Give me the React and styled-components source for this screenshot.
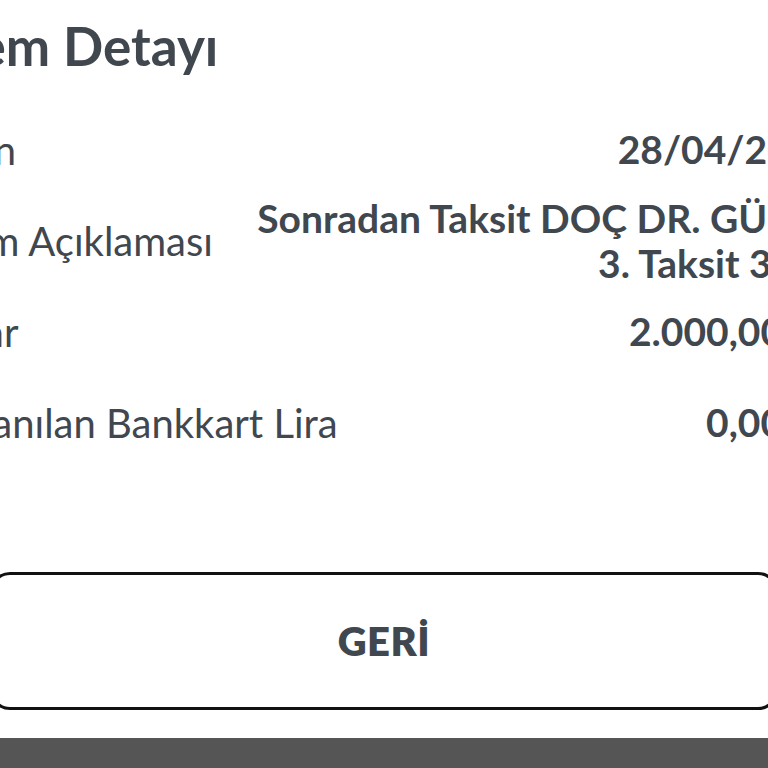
import React from "react";
import styled, { createGlobalStyle } from "styled-components";

const GlobalStyle = createGlobalStyle`
  html, body {
    margin: 0;
    padding: 0;
    background: #ffffff;
  }
  body {
    font-family: Lato, "Noto Sans", "Liberation Sans", sans-serif;
    color: #41474f;
  }
`;

const rows = [
  { label: "Oran", value: ["28/04/2024"] },
  {
    label: "İşlem Açıklaması",
    value: ["Sonradan Taksit DOÇ DR. GÜLER", "3. Taksit 3/12"],
  },
  { label: "Tutar", value: ["2.000,00 TL"] },
  { label: "Kazanılan Bankkart Lira", value: ["0,00 TL"] },
];

class App extends React.Component {
  render() {
    return (
      <Page>
        <GlobalStyle />
        <Content>
          <Title>İşlem Detayı</Title>
          <DetailList>
            {rows.map((row) => (
              <DetailRow key={row.label}>
                <Label>{row.label}</Label>
                <Value>
                  {row.value.map((line) => (
                    <ValueLine key={line}>{line}</ValueLine>
                  ))}
                </Value>
              </DetailRow>
            ))}
          </DetailList>
        </Content>
        <ButtonArea>
          <BackButton type="button">GERİ</BackButton>
        </ButtonArea>
        <BottomBar />
      </Page>
    );
  }
}

export default App;

const Page = styled.div`
  width: 768px;
  height: 768px;
  overflow: hidden;
  display: flex;
  flex-direction: column;
  background: #fff;
`;

const Content = styled.div`
  margin-left: -72px;
  width: 907px;
  flex-shrink: 0;
`;

const Title = styled.h1`
  margin: 0 0 0 -2px;
  padding-top: 18px;
  font-size: 53px;
  line-height: 56px;
  font-weight: 700;
`;

const DetailList = styled.div`
  margin-top: 30px;
  display: flex;
  flex-direction: column;
`;

const DetailRow = styled.div`
  display: flex;
  align-items: center;
  justify-content: space-between;
  min-height: 91px;
`;

const Label = styled.span`
  font-size: 40px;
  font-weight: 400;
  white-space: nowrap;
`;

const Value = styled.div`
  display: flex;
  flex-direction: column;
  align-items: flex-end;
  text-align: right;
`;

const ValueLine = styled.span`
  font-size: 39px;
  line-height: 45px;
  font-weight: 700;
  white-space: nowrap;
`;

const ButtonArea = styled.div`
  margin: 104px -10px 0;
  flex-shrink: 0;
`;

const BackButton = styled.button`
  display: flex;
  align-items: center;
  justify-content: center;
  width: 100%;
  height: 138px;
  border: 3px solid #111;
  border-radius: 20px;
  background: #fff;
  font-family: Lato, "Noto Sans", sans-serif;
  font-size: 40px;
  font-weight: 800;
  color: #41474f;
  letter-spacing: 0.5px;
`;

const BottomBar = styled.div`
  margin-top: 28px;
  flex: 1;
  background: #555555;
`;
